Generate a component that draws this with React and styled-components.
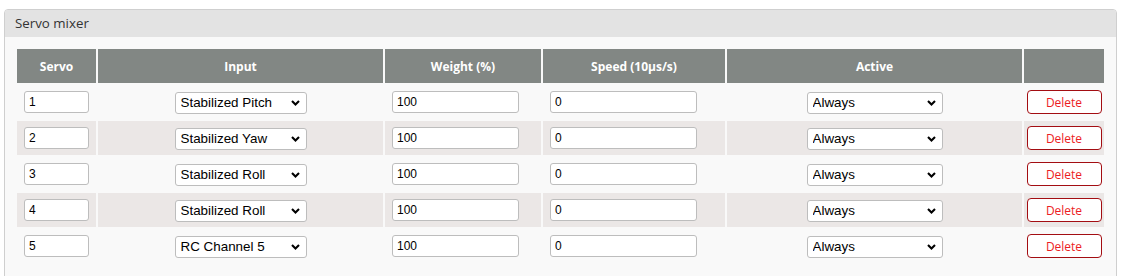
import React from 'react';
import styled, { createGlobalStyle } from 'styled-components';

const GlobalStyle = createGlobalStyle`
  body {
    margin: 0;
    background: #ffffff;
    font-family: "Open Sans", "Liberation Sans", Arial, sans-serif;
  }
`;

const Page = styled.div`
  padding: 9px 14px 0 4px;
`;

const Panel = styled.div`
  border: 1px solid #cfcfcf;
  border-radius: 4px 4px 0 0;
  background: #f9f9f9;
  overflow: hidden;
`;

const PanelTitle = styled.div`
  height: 27px;
  line-height: 26px;
  padding-left: 10px;
  background: #e3e3e3;
  color: #333;
  font-size: 13.3px;
`;

const PanelBody = styled.div`
  padding: 10px 10px 20px 10px;
`;

const Table = styled.table`
  width: 1091px;
  table-layout: fixed;
  border-collapse: separate;
  border-spacing: 2px;
`;

const HeadCell = styled.th`
  height: 34px;
  padding: 0;
  background: #828784;
  color: #ffffff;
  font-size: 12px;
  font-weight: 700;
  text-align: center;
  vertical-align: middle;
`;

const Row = styled.tr`
  background: ${p => (p.$striped ? '#ebe7e6' : 'transparent')};
`;

const Cell = styled.td`
  height: 34px;
  padding: 0 0 0 ${p => (p.$center ? 0 : 7)}px;
  text-align: ${p => (p.$center ? 'center' : 'left')};
  vertical-align: middle;
`;

const TextInput = styled.input`
  box-sizing: border-box;
  display: block;
  width: ${p => p.$w}px;
  height: 22px;
  padding: 0 4px;
  border: 1px solid #bdbdbd;
  border-radius: 3px;
  background: #fff;
  color: #000;
  font-family: "Liberation Sans", Arial, sans-serif;
  font-size: 12px;
  outline: none;
`;

const SelectWrap = styled.span`
  position: relative;
  display: inline-block;
  vertical-align: middle;
`;

const Select = styled.select`
  box-sizing: border-box;
  display: block;
  appearance: none;
  -webkit-appearance: none;
  width: ${p => p.$w}px;
  height: 22px;
  padding: 0 20px 0 5px;
  border: 1px solid #bdbdbd;
  border-radius: 3px;
  background: #fff;
  color: #000;
  font-family: "Liberation Sans", Arial, sans-serif;
  font-size: 13.4px;
  outline: none;
`;

const Chevron = styled.svg`
  position: absolute;
  right: 7px;
  top: 8px;
  pointer-events: none;
`;

const DeleteButton = styled.button`
  box-sizing: border-box;
  width: 75px;
  height: 24px;
  padding: 0;
  border: 1px solid #a30d12;
  border-radius: 4px;
  background: #fff;
  color: #ec1c24;
  font-family: "Open Sans", "Liberation Sans", Arial, sans-serif;
  font-size: 12px;
  cursor: pointer;
  vertical-align: middle;
`;

const Dropdown = ({ value, width }) => (
  <SelectWrap>
    <Select $w={width} defaultValue={value}>
      <option>{value}</option>
    </Select>
    <Chevron width="9" height="6" viewBox="0 0 9 6">
      <path d="M1 1 L4.5 4.5 L8 1" fill="none" stroke="#000" strokeWidth="2.1" />
    </Chevron>
  </SelectWrap>
);

const rows = [
  { servo: '1', input: 'Stabilized Pitch' },
  { servo: '2', input: 'Stabilized Yaw' },
  { servo: '3', input: 'Stabilized Roll' },
  { servo: '4', input: 'Stabilized Roll' },
  { servo: '5', input: 'RC Channel 5' },
];

export default function App() {
  return (
    <Page>
      <GlobalStyle />
      <Panel>
        <PanelTitle>Servo mixer</PanelTitle>
        <PanelBody>
          <Table>
            <colgroup>
              <col style={{ width: 79 }} />
              <col style={{ width: 285 }} />
              <col style={{ width: 156 }} />
              <col style={{ width: 182 }} />
              <col style={{ width: 295 }} />
              <col style={{ width: 80 }} />
            </colgroup>
            <thead>
              <tr>
                <HeadCell>Servo</HeadCell>
                <HeadCell>Input</HeadCell>
                <HeadCell>Weight (%)</HeadCell>
                <HeadCell>Speed (10µs/s)</HeadCell>
                <HeadCell>Active</HeadCell>
                <HeadCell />
              </tr>
            </thead>
            <tbody>
              {rows.map((r, i) => (
                <Row key={i} $striped={i % 2 === 1}>
                  <Cell><TextInput $w={65} defaultValue={r.servo} /></Cell>
                  <Cell $center><Dropdown value={r.input} width={132} /></Cell>
                  <Cell><TextInput $w={127} defaultValue="100" /></Cell>
                  <Cell><TextInput $w={147} defaultValue="0" /></Cell>
                  <Cell $center><Dropdown value="Always" width={136} /></Cell>
                  <Cell $center><DeleteButton>Delete</DeleteButton></Cell>
                </Row>
              ))}
            </tbody>
          </Table>
        </PanelBody>
      </Panel>
    </Page>
  );
}
